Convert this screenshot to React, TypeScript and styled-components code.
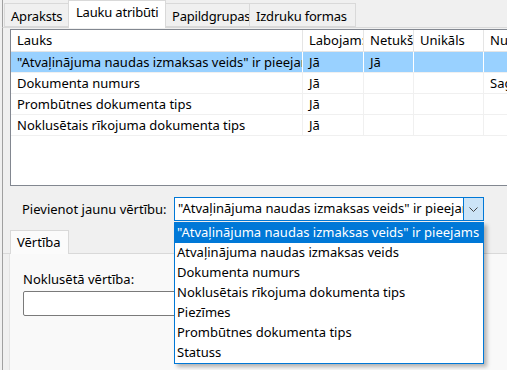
import styled, { createGlobalStyle } from "styled-components";

const GlobalStyle = createGlobalStyle`
  html, body {
    margin: 0;
    padding: 0;
    background: #f0f0f0;
  }
  * {
    box-sizing: border-box;
  }
`;

const topTabs = [
  { title: "Apraksts", width: 65 },
  { title: "Lauku atribūti", width: 98 },
  { title: "Papildgrupas", width: 85 },
  { title: "Izdruku formas", width: 107 },
];

const columns = [
  { title: "Lauks", width: 292 },
  { title: "Labojam:", width: 61 },
  { title: "Netukš", width: 50 },
  { title: "Unikāls", width: 70 },
  { title: "Nu", width: 60 },
];

const rows = [
  ['"Atvaļinājuma naudas izmaksas veids" ir pieejams', "Jā", "Jā", "", ""],
  ["Dokumenta numurs", "Jā", "", "", "Sag"],
  ["Prombūtnes dokumenta tips", "Jā", "", "", ""],
  ["Noklusētais rīkojuma dokumenta tips", "Jā", "", "", ""],
];

const options = [
  '"Atvaļinājuma naudas izmaksas veids" ir pieejams',
  "Atvaļinājuma naudas izmaksas veids",
  "Dokumenta numurs",
  "Noklusētais rīkojuma dokumenta tips",
  "Piezīmes",
  "Prombūtnes dokumenta tips",
  "Statuss",
];

export default function App() {
  return (
    <>
      <GlobalStyle />
      <Window>
        <TabStrip>
          {topTabs.map((t, i) => (
            <Tab key={t.title} $active={i === 1} $w={t.width}>
              {t.title}
            </Tab>
          ))}
        </TabStrip>
        <Page>
          <Grid>
            <GridRow $header>
              {columns.map((c) => (
                <Cell key={c.title} $w={c.width}>
                  {c.title}
                </Cell>
              ))}
            </GridRow>
            {rows.map((r, ri) => (
              <GridRow key={ri} $selected={ri === 0}>
                {r.map((v, ci) => (
                  <Cell key={ci} $w={columns[ci].width}>
                    {v}
                  </Cell>
                ))}
              </GridRow>
            ))}
          </Grid>
          <Lower>
            <AddRow>
              <AddLabel>Pievienot jaunu vērtību:</AddLabel>
              <Combo>
                <ComboText>{options[0]}</ComboText>
                <ComboButton>
                  <svg width="9" height="5" viewBox="0 0 9 5">
                    <path d="M0.5 0.5 L4.5 4.5 L8.5 0.5" fill="none" stroke="#444" strokeWidth="1" />
                  </svg>
                </ComboButton>
                <DropList>
                  {options.map((o, i) => (
                    <Option key={o} $hot={i === 0}>
                      {o}
                    </Option>
                  ))}
                </DropList>
              </Combo>
            </AddRow>
            <InnerTabs>
              <InnerTab>Vērtība</InnerTab>
            </InnerTabs>
            <InnerPage>
              <Label>Noklusētā vērtība:</Label>
              <TextBox />
            </InnerPage>
          </Lower>
        </Page>
      </Window>
    </>
  );
}

const Window = styled.div`
  width: 507px;
  height: 370px;
  overflow: hidden;
  background: #f0f0f0;
  padding-left: 2px;
  font-family: "Noto Sans", "Open Sans", sans-serif;
  font-size: 13px;
  color: #000;
  display: flex;
  flex-direction: column;
`;

const TabStrip = styled.div`
  height: 28px;
  flex: none;
  display: flex;
  align-items: flex-end;
  padding-left: 2px;
  border-left: 1px solid #a0a0a0;
  border-bottom: 1px solid #d9d9d9;
`;

const Tab = styled.div<{ $active?: boolean; $w: number }>`
  width: ${(p) => p.$w}px;
  height: ${(p) => (p.$active ? "28px" : "24px")};
  margin-bottom: ${(p) => (p.$active ? "-1px" : "0")};
  padding: ${(p) => (p.$active ? "2px 0 0 7px" : "3px 0 0 6px")};
  background: ${(p) => (p.$active ? "#fff" : "#f0f0f0")};
  border: 1px solid #d9d9d9;
  border-bottom: ${(p) => (p.$active ? "none" : "1px solid #d9d9d9")};
  margin-left: -1px;
  white-space: nowrap;
  overflow: hidden;
  letter-spacing: -0.2px;
  line-height: 18px;
  position: relative;
  z-index: ${(p) => (p.$active ? 1 : 0)};
`;

const Page = styled.div`
  flex: 1;
  display: flex;
  flex-direction: column;
  border-left: 1px solid #a0a0a0;
`;

const Grid = styled.div`
  height: 157px;
  flex: none;
  margin-left: 7px;
  margin-top: 1px;
  background: #fff;
  border: 1px solid #828790;
  border-right: none;
  overflow: hidden;
`;

const GridRow = styled.div<{ $header?: boolean; $selected?: boolean }>`
  display: flex;
  height: ${(p) => (p.$header ? "22px" : "21px")};
  background: ${(p) => (p.$selected ? "#99d1ff" : "#fff")};
  border-bottom: 1px solid ${(p) => (p.$header ? "#e5e5e5" : "#f0f0f0")};
  > div {
    border-right: 1px solid ${(p) => (p.$selected ? "#fff" : p.$header ? "#e5e5e5" : "#f0f0f0")};
  }
`;

const Cell = styled.div<{ $w: number }>`
  flex: none;
  width: ${(p) => p.$w}px;
  padding-left: 6px;
  line-height: 20px;
  white-space: nowrap;
  overflow: hidden;
`;

const Lower = styled.div`
  flex: 1;
  display: flex;
  flex-direction: column;
`;

const AddRow = styled.div`
  display: flex;
  align-items: center;
  margin-top: 11px;
  padding-left: 19px;
  height: 24px;
  flex: none;
`;

const Label = styled.div`
  white-space: nowrap;
  line-height: 17px;
`;

const AddLabel = styled(Label)`
  width: 152px;
  flex: none;
`;

const Combo = styled.div`
  position: relative;
  width: 310px;
  height: 24px;
  background: #fff;
  border: 1px solid #0078d7;
  display: flex;
`;

const ComboText = styled.div`
  flex: 1;
  overflow: hidden;
  white-space: nowrap;
  padding-left: 3px;
  line-height: 21px;
`;

const ComboButton = styled.div`
  width: 20px;
  flex: none;
  background: #cce4f7;
  border-left: 1px solid #0078d7;
  display: flex;
  align-items: center;
  justify-content: center;
`;

const DropList = styled.div`
  position: absolute;
  left: -1px;
  top: 24px;
  width: 310px;
  background: #fff;
  border: 1px solid #0078d7;
  box-shadow: 3px 3px 4px rgba(0, 0, 0, 0.28);
  z-index: 5;
`;

const Option = styled.div<{ $hot?: boolean }>`
  height: 20px;
  line-height: 19px;
  padding-left: 2px;
  white-space: nowrap;
  overflow: hidden;
  background: ${(p) => (p.$hot ? "#0078d7" : "#fff")};
  color: ${(p) => (p.$hot ? "#fff" : "#000")};
`;

const InnerTabs = styled.div`
  margin-top: 9px;
  display: flex;
  padding-left: 7px;
  height: 24px;
  flex: none;
  border-bottom: 1px solid #d9d9d9;
`;

const InnerTab = styled.div`
  height: 24px;
  padding: 2px 7px 0 6px;
  background: #fbfbfb;
  border: 1px solid #d9d9d9;
  border-bottom: none;
  margin-bottom: -1px;
  line-height: 18px;
`;

const InnerPage = styled.div`
  flex: 1;
  margin-left: 6px;
  background: #f9f9f9;
  border-left: 1px solid #e3e3e3;
  padding: 17px 0 0 13px;
  display: flex;
  flex-direction: column;
  gap: 3px;
`;

const TextBox = styled.div`
  width: 200px;
  height: 25px;
  background: #fff;
  border: 1px solid #7a7a7a;
  border-radius: 2px;
`;
